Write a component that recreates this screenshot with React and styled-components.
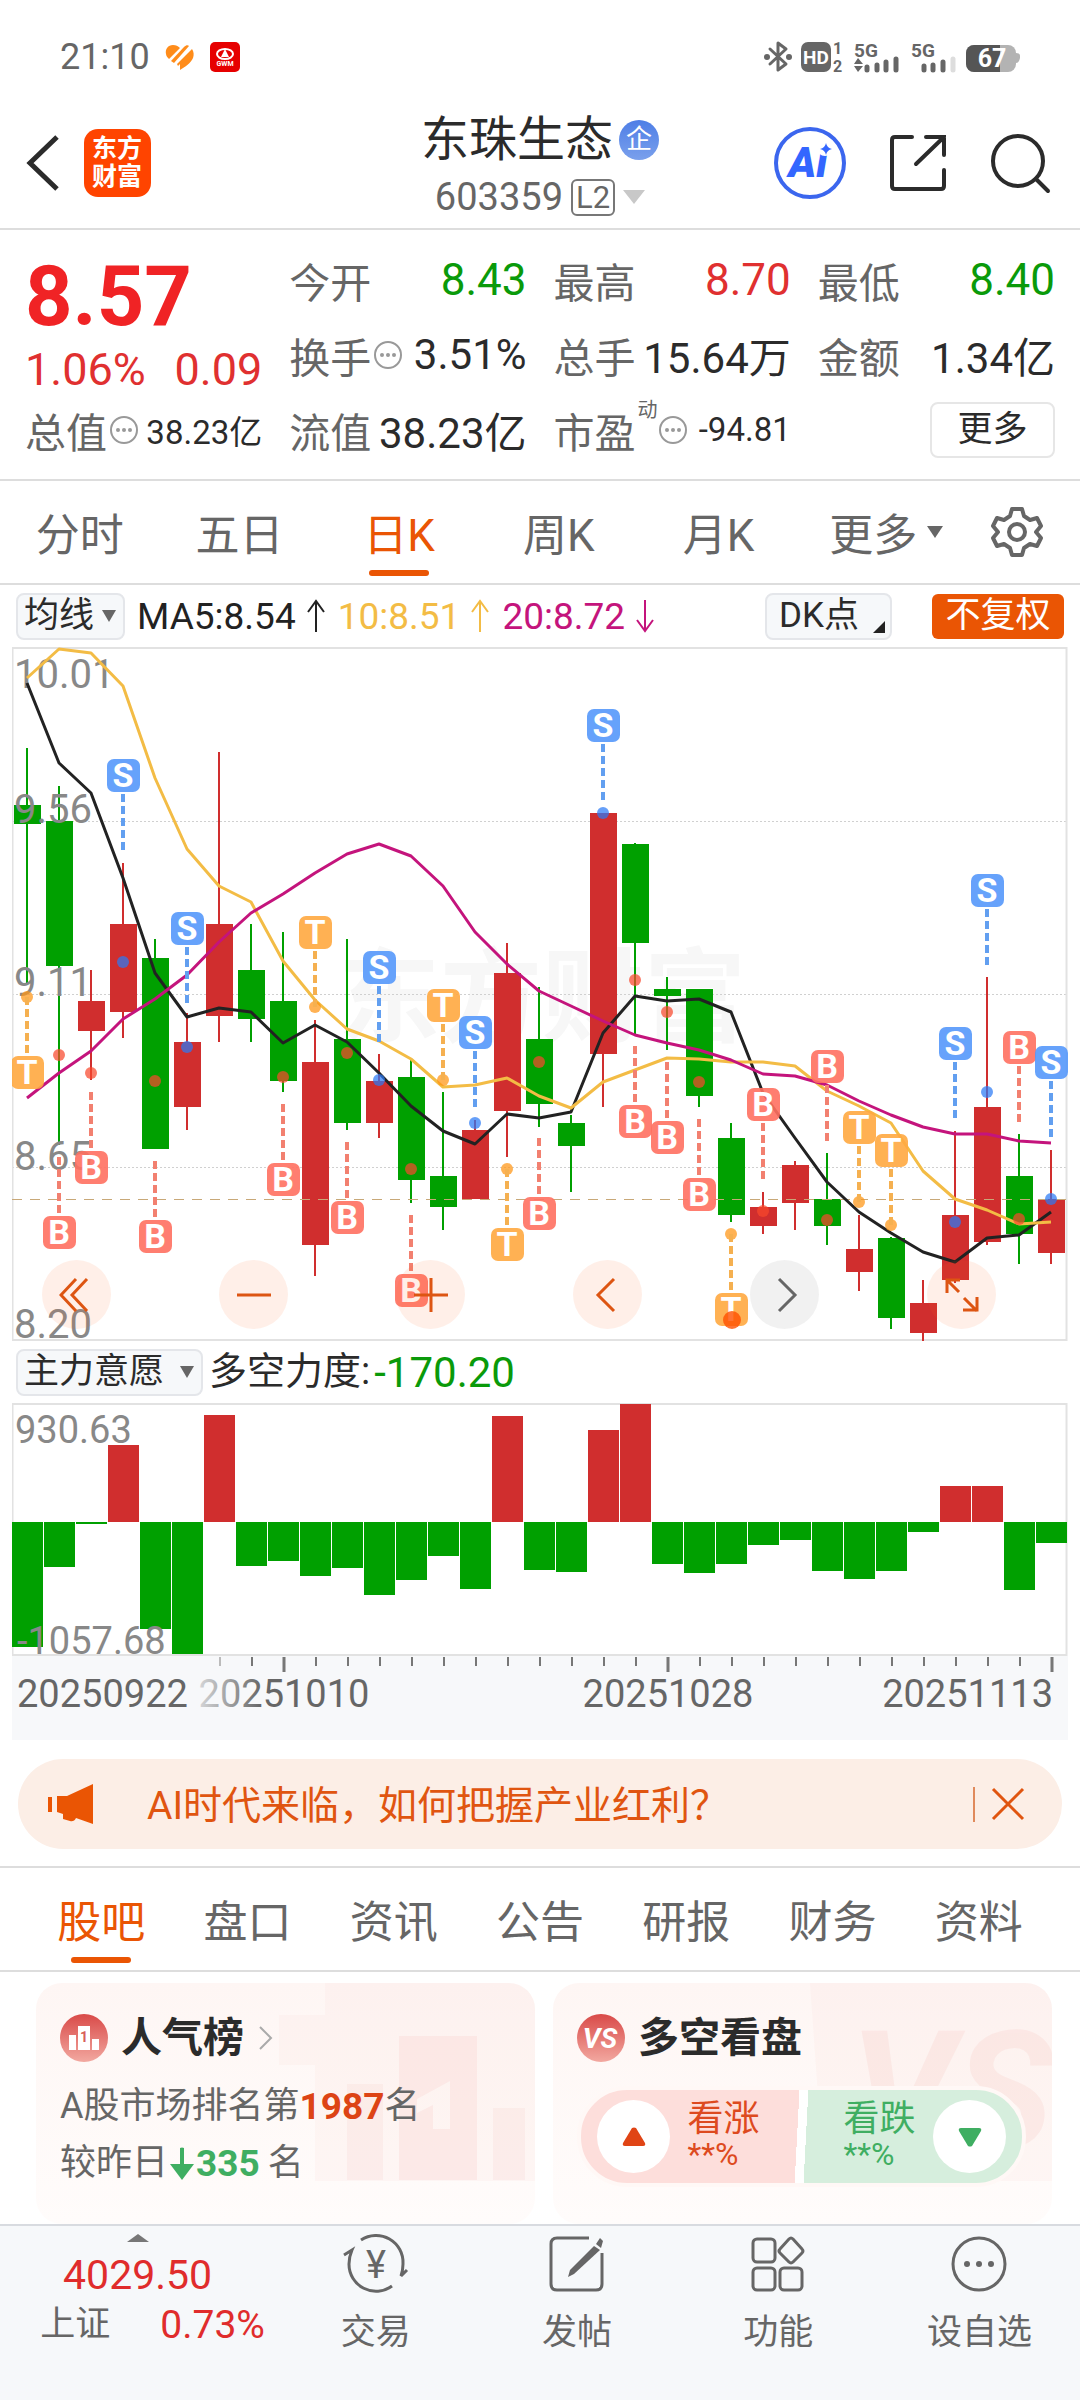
import styled, { createGlobalStyle, css } from "styled-components";

const GlobalStyle = createGlobalStyle`
  * {
    box-sizing: border-box;
  }
  body {
    margin: 0;
    background: #fff;
    color: #2b2b2b;
    font-family: Roboto, "Noto Sans CJK SC", sans-serif;
  }
  button {
    padding: 0;
    border: 0;
    background: none;
    color: inherit;
    font: inherit;
    cursor: pointer;
  }
  a {
    color: inherit;
    text-decoration: none;
  }
  svg {
    display: block;
    flex: none;
  }
`;

const UP = "#d02e2e";
const DOWN = "#00a000";
const ACCENT = "#ea5504";

const Page = styled.div`
  display: flex;
  flex-direction: column;
  min-height: 100vh;
`;

/* ---------- status bar ---------- */

const StatusBar = styled.div`
  display: flex;
  align-items: center;
  justify-content: space-between;
  height: 96px;
  padding: 18px 60px 0;
  color: #666;
`;
const StatusGroup = styled.div`
  display: flex;
  align-items: center;
  gap: ${(props) => props.$gap}px;
`;
const Clock = styled.span`
  font-size: 36px;
`;

function StatusIcons() {
  return (
    <svg width="256" height="52" viewBox="764 31 256 52" fill="#666">
      <path
        d="M770 49l16 15-8 6V43l8 6-16 15"
        fill="none"
        stroke="#666"
        strokeWidth="3"
        strokeLinejoin="round"
        strokeLinecap="round"
      />
      <circle cx="767" cy="57" r="3" />
      <circle cx="789" cy="57" r="3" />
      <rect x="801" y="42" width="30" height="30" rx="7" />
      <text x="816" y="64" fontSize="19" fontWeight="700" fill="#fff" textAnchor="middle">
        HD
      </text>
      <text x="833" y="54" fontSize="16" fontWeight="700">
        1
      </text>
      <text x="833" y="72" fontSize="16" fontWeight="700">
        2
      </text>
      <text x="854" y="57" fontSize="19" fontWeight="700">
        5G
      </text>
      <path d="M854 64l4-6 5 6zM854 66h9l-5 6z" />
      <path
        d="M867 67v3M877 65v5M886 62v8M896 59v11M924 66v4M933 65v5M943 62v8"
        stroke="#666"
        strokeWidth="5"
        strokeLinecap="round"
      />
      <path d="M953 59v11" stroke="#ddd" strokeWidth="5" strokeLinecap="round" />
      <text x="911" y="57" fontSize="19" fontWeight="700">
        5G
      </text>
      <rect x="966" y="45" width="50" height="27" rx="8" fill="#b3b3b3" />
      <path d="M1016 53q5 0 4 5t-4 5z" fill="#b3b3b3" />
      <path d="M974 45h26v27h-26a8 8 0 0 1-8-8v-11a8 8 0 0 1 8-8z" fill="#555" />
      <text x="992" y="67" fontSize="25" fontWeight="700" fill="#fff" textAnchor="middle">
        67
      </text>
    </svg>
  );
}

function HeartIcon() {
  return (
    <svg width="30" height="26" viewBox="0 0 30 26" fill="#ff8c1a">
      <path d="M8 1C3 1 0 5 1 10c0 2 2 4 3 5L15 4C13 2 11 1 8 1z" />
      <path d="M6 17L19 3c2-2 4-2 5-1L9 19z" />
      <path d="M12 20L27 5c2 3 2 6 1 9-2 5-8 9-13 12v-6l-2 2z" />
    </svg>
  );
}

function CarAppIcon() {
  return (
    <svg width="30" height="30" viewBox="0 0 30 30">
      <rect width="30" height="30" rx="5" fill="#e60000" />
      <ellipse cx="15" cy="12" rx="8" ry="5" fill="none" stroke="#fff" strokeWidth="2" />
      <path d="M15 7l4 8h-8z" fill="#fff" />
      <text x="15" y="24" fontSize="7" fontWeight="700" fill="#fff" textAnchor="middle">
        GWM
      </text>
    </svg>
  );
}

/* ---------- header ---------- */

const Header = styled.header`
  display: grid;
  grid-template-columns: 1fr auto 1fr;
  align-items: center;
  height: 134px;
  padding: 2px 28px 0 24px;
  border-bottom: 2px solid #ddd;
`;
const HeaderSide = styled.div`
  display: flex;
  align-items: center;
  justify-content: ${(props) => (props.$end ? "flex-end" : "flex-start")};
  gap: ${(props) => (props.$end ? 42 : 24)}px;
`;
const AppLogo = styled.span`
  width: 67px;
  height: 68px;
  padding: 6px 8px;
  border-radius: 14px;
  background: #ff4400;
  color: #fff;
  font-family: "Liberation Serif", "Noto Sans CJK SC", serif;
  font-size: 25px;
  font-weight: 700;
  line-height: 28px;
`;
const TitleBlock = styled.div`
  display: flex;
  flex-direction: column;
  align-items: center;
  padding: 4px 0 0 4px;
`;
const StockName = styled.h1`
  display: flex;
  align-items: center;
  gap: 6px;
  margin: 0;
  font-size: 48px;
  font-weight: 400;
  line-height: 64px;
`;
const EntBadge = styled.span`
  width: 40px;
  height: 40px;
  border-radius: 50%;
  background: linear-gradient(#4e7ee6, #7aa0ec);
  color: #fff;
  font-size: 26px;
  line-height: 38px;
  text-align: center;
`;
const StockCode = styled.div`
  display: flex;
  align-items: center;
  gap: 8px;
  color: #666;
  font-size: 38px;
  line-height: 50px;
`;
const Level = styled.span`
  height: 37px;
  padding: 0 3px;
  border: 2px solid #777;
  border-radius: 6px;
  font-size: 31px;
  line-height: 34px;
`;
const Caret = styled.span`
  border: ${(props) => props.$size || 8}px solid transparent;
  border-top: ${(props) => props.$drop || 12}px solid ${(props) => props.$color || "#666"};
  border-bottom: 0;
`;

/* ---------- quote ---------- */

const Quote = styled.section`
  display: grid;
  grid-template-columns: repeat(4, 1fr);
  grid-template-rows: repeat(3, 75px);
  column-gap: 27px;
  padding: 12px 25px;
  border-bottom: 2px solid #ddd;
`;
const PriceBlock = styled.div`
  grid-row: 1 / span 2;
  display: flex;
  flex-direction: column;
  color: #e03030;
`;
const Price = styled.strong`
  padding-top: 6px;
  color: #f02325;
  font-size: 83px;
  line-height: 98px;
`;
const Change = styled.div`
  display: flex;
  justify-content: space-between;
  font-size: 45px;
  line-height: 48px;
`;
const Stat = styled.div`
  display: flex;
  align-items: center;
  min-width: 0;
  white-space: nowrap;
`;
const StatLabel = styled.span`
  margin-right: 2px;
  color: #666;
  font-size: 41px;
`;
const StatSup = styled.sup`
  align-self: flex-start;
  color: #666;
  font-size: 20px;
  line-height: 36px;
`;
const StatValue = styled.span`
  margin-left: auto;
  font-size: ${(props) => (props.$small ? 33 : props.$color ? 44 : 42)}px;
  color: ${(props) => props.$color || "#2b2b2b"};
`;
const MoreButton = styled.button`
  align-self: center;
  justify-self: end;
  width: 125px;
  height: 56px;
  border: 2px solid #e6e6e6;
  border-radius: 8px;
  font-size: 35px;
  line-height: 48px;
`;

function DotsIcon() {
  return (
    <svg width="30" height="30" viewBox="0 0 30 30">
      <circle cx="15" cy="15" r="13" fill="none" stroke="#999" strokeWidth="2" />
      <circle cx="9" cy="15" r="2" fill="#999" />
      <circle cx="15" cy="15" r="2" fill="#999" />
      <circle cx="21" cy="15" r="2" fill="#999" />
    </svg>
  );
}

const stats = [
  { label: "今开", value: "8.43", color: "#0a9a0a" },
  { label: "最高", value: "8.70", color: "#e03030" },
  { label: "最低", value: "8.40", color: "#0a9a0a" },
  { label: "换手", value: "3.51%", info: true },
  { label: "总手", value: "15.64万" },
  { label: "金额", value: "1.34亿" },
  { label: "总值", value: "38.23亿", info: true, small: true },
  { label: "流值", value: "38.23亿" },
  { label: "市盈", value: "-94.81", sup: "动", info: true, small: true },
];

/* ---------- tabs ---------- */

const Tabs = styled.nav`
  display: flex;
  align-items: stretch;
  height: 104px;
  border-bottom: 2px solid #ddd;
  ${(props) =>
    props.$inset &&
    css`
      padding: 0 28px;
      border-top: 2px solid #ddd;
      height: 106px;
    `}
`;
const Tab = styled.button`
  position: relative;
  flex: ${(props) => (props.$menu ? 1.1 : 1)} 1 0;
  display: flex;
  align-items: center;
  justify-content: center;
  gap: 10px;
  font-size: 44px;
  color: ${(props) => (props.$active ? ACCENT : "#666")};
  ${(props) =>
    props.$active &&
    css`
      &::after {
        content: "";
        position: absolute;
        left: 50%;
        bottom: 7px;
        width: 60px;
        height: 6px;
        margin-left: -30px;
        border-radius: 3px;
        background: ${ACCENT};
      }
    `}
`;
const GearButton = styled.button`
  display: flex;
  align-items: center;
  justify-content: center;
  width: 106px;
  padding-right: 20px;
`;

/* ---------- indicator rows ---------- */

const IndicatorRow = styled.div`
  display: flex;
  align-items: center;
  height: 62px;
  padding: 0 16px;
  font-size: 37px;
  white-space: nowrap;
`;
const Chip = styled.button`
  position: relative;
  display: flex;
  align-items: center;
  gap: ${(props) => props.$gap || 8}px;
  height: 47px;
  padding: 0 7px 0 6px;
  border: 2px solid #e4e6ea;
  border-radius: 8px;
  background: #f6f8fa;
  font-size: 35px;
  line-height: 40px;
  ${(props) =>
    props.$corner &&
    css`
      width: 127px;
      margin-left: auto;
      padding-left: 12px;
      &::after {
        content: "";
        position: absolute;
        right: 5px;
        bottom: 5px;
        border-left: 12px solid transparent;
        border-bottom: 12px solid #222;
      }
    `}
`;
const AdjustButton = styled.button`
  width: 132px;
  height: 45px;
  margin-left: 40px;
  border-radius: 6px;
  background: ${ACCENT};
  color: #fff;
  font-size: 35px;
  line-height: 44px;
`;
const MaValue = styled.span`
  display: flex;
  align-items: center;
  gap: 10px;
  margin-left: 12px;
  color: ${(props) => props.$color};
`;
const ForceLabel = styled.span`
  margin-left: 6px;
  font-size: 38px;
  line-height: 52px;
  padding-bottom: 2px;
`;
const ForceValue = styled.span`
  margin-left: 4px;
  color: #0a9a0a;
  font-size: 42px;
`;

function TrendArrow({ down }) {
  return (
    <svg width="20" height="36" viewBox="0 0 20 36" fill="none" stroke="currentColor" strokeWidth="2">
      <path d={down ? "M10 2v31M2 22l8 11 8-11" : "M10 34V3M2 14l8-11 8 11"} />
    </svg>
  );
}

/* ---------- charts ---------- */

// [direction, high, body top, body bottom, low] on the vertical scale of the chart
const candles = [
  [0, 748, 805, 824, 985],
  [0, 786, 821, 966, 1145],
  [1, 970, 1001, 1031, 1080],
  [1, 863, 924, 1012, 1038],
  [0, 939, 958, 1149, 1149],
  [1, 1013, 1042, 1107, 1130],
  [1, 752, 924, 1016, 1042],
  [0, 924, 970, 1019, 1042],
  [0, 932, 1001, 1081, 1092],
  [1, 1020, 1062, 1245, 1276],
  [0, 939, 1039, 1123, 1130],
  [1, 1054, 1081, 1123, 1138],
  [0, 1059, 1077, 1180, 1203],
  [0, 1092, 1176, 1207, 1230],
  [1, 1120, 1130, 1199, 1199],
  [1, 943, 973, 1111, 1157],
  [0, 987, 1039, 1104, 1127],
  [0, 1115, 1123, 1146, 1192],
  [1, 813, 813, 1054, 1107],
  [0, 843, 844, 943, 1035],
  [0, 977, 989, 996, 1050],
  [0, 989, 989, 1096, 1107],
  [0, 1123, 1138, 1215, 1222],
  [1, 1192, 1207, 1226, 1234],
  [1, 1161, 1165, 1203, 1230],
  [0, 1153, 1199, 1226, 1245],
  [1, 1215, 1249, 1272, 1291],
  [0, 1237, 1238, 1318, 1329],
  [1, 1280, 1303, 1333, 1341],
  [1, 1131, 1215, 1280, 1283],
  [1, 977, 1107, 1242, 1245],
  [0, 1134, 1176, 1234, 1264],
  [1, 1150, 1199, 1253, 1264],
];

const ma5 = [
  683, 763, 793, 878, 973, 1017, 1008, 1012, 1043, 1025, 1042, 1073, 1106, 1131,
  1144, 1114, 1118, 1112, 1033, 996, 1001, 999, 1012, 1093, 1138, 1182, 1212,
  1233, 1252, 1262, 1238, 1235, 1212,
];
const ma10 = [
  678, 649, 653, 686, 778, 849, 886, 902, 961, 1000, 1029, 1041, 1059, 1087,
  1085, 1078, 1096, 1108, 1082, 1070, 1058, 1059, 1062, 1062, 1066, 1091, 1106,
  1123, 1171, 1199, 1210, 1224, 1222,
];
const ma20 = [
  1098, 1073, 1051, 1019, 999, 975, 942, 913, 894, 873, 854, 844, 856, 886, 932,
  964, 991, 1006, 1021, 1035, 1043, 1050, 1060, 1074, 1076, 1085, 1101, 1115,
  1127, 1134, 1134, 1141, 1143,
];

// [candle index, letter, badge centre, dot centre]
const signals = [
  [0, "T", 1072, 997],
  [1, "B", 1232, 1055],
  [2, "B", 1167, 1073],
  [3, "S", 775, 962],
  [4, "B", 1236, 1081],
  [5, "S", 928, 1047],
  [8, "B", 1179, 1077],
  [9, "T", 932, 1007],
  [10, "B", 1217, 1053],
  [11, "S", 967, 1080],
  [12, "B", 1290, 1169],
  [13, "T", 1005, 1080],
  [14, "S", 1032, 1123],
  [15, "T", 1244, 1169],
  [16, "B", 1213, 1062],
  [18, "S", 725, 813],
  [19, "B", 1121, 980],
  [20, "B", 1137, 1012],
  [21, "B", 1194, 1082],
  [22, "T", 1309, 1234],
  [23, "B", 1104, 1211],
  [25, "B", 1066, 1220],
  [26, "T", 1127, 1202],
  [27, "T", 1150, 1225],
  [29, "S", 1043, 1222],
  [30, "S", 890, 1092],
  [31, "B", 1047, 1219],
  [32, "S", 1062, 1199],
];

const signalColors = {
  S: { badge: "#5598fb", line: "#629ff0", dot: "#2b7af5" },
  B: { badge: "#ff7060", line: "#f28070", dot: "#f8482c" },
  T: { badge: "#ffa840", line: "#f5b050", dot: "#ff9412" },
};

const priceLabels = [
  ["10.01", 688],
  ["9.56", 823],
  ["9.11", 996],
  ["8.65", 1170],
  ["8.20", 1338],
];

const xAt = (i) => 27 + 32 * i;
const toPoints = (values) => values.map((y, i) => `${xAt(i)},${y}`).join(" ");

const ChartFrame = styled.div`
  position: relative;
  margin: 0 12px;
`;
const ChartSvg = styled.svg`
  width: 100%;
  height: auto;
`;
const ChartControls = styled.div`
  position: absolute;
  left: 30px;
  right: 72px;
  bottom: 12px;
  display: flex;
  justify-content: space-between;
`;
const RoundButton = styled.button`
  display: flex;
  align-items: center;
  justify-content: center;
  width: 69px;
  height: 69px;
  border-radius: 50%;
  background: ${(props) => (props.$muted ? "rgba(102, 102, 102, 0.09)" : "rgba(255, 100, 30, 0.1)")};
  color: ${(props) => (props.$muted ? "#666" : "#dd5512")};
`;

function Signal({ index, letter, badge, dot }) {
  const x = xAt(index);
  const dir = dot > badge ? 1 : -1;
  const color = signalColors[letter];
  return (
    <g>
      <circle cx={x} cy={dot} r="6" fill={color.dot} opacity="0.72" />
      <path
        d={`M${x} ${badge + 19 * dir}v${56 * dir}`}
        stroke={color.line}
        strokeWidth="4"
        strokeDasharray="8 4"
      />
      <rect x={x - 16} y={badge - 16} width="33" height="33" rx="7" fill={color.badge} opacity="0.9" />
      <text x={x} y={badge + 12} fontSize="34" fontWeight="700" fill="#fff" textAnchor="middle">
        {letter}
      </text>
    </g>
  );
}

function CandleChart() {
  return (
    <ChartSvg viewBox="12 647 1056 694" role="img" aria-label="日K">
      <text x="338" y="1034" fontSize="102" fontWeight="700" fill="#f7f7f7">
        东方财富
      </text>
      <g stroke="#d0d0d0" strokeDasharray="2 2">
        <path d="M12 821.5h1055M12 994.5h1055M12 1167.5h1055" />
      </g>
      <rect x="12.5" y="648" width="1054" height="692" fill="none" stroke="#e2e2e2" strokeWidth="2" />
      {candles.map(([up, high, top, bottom, low], i) => (
        <g key={i} fill={up ? UP : DOWN}>
          <rect x={xAt(i) - 1} y={high} width="2" height={low - high} />
          <rect x={xAt(i) - 13} y={top} width="27" height={bottom - top} />
        </g>
      ))}
      <path d="M12 1199.5h1055" stroke="#c8a878" strokeWidth="1" strokeDasharray="10 8" />
      {priceLabels.map(([label, y]) => (
        <text key={label} x="14" y={y} fontSize="40" fill="#888">
          {label}
        </text>
      ))}
      <g fill="none" strokeWidth="3" strokeLinejoin="round">
        <polyline points={toPoints(ma5)} stroke="#222" />
        <polyline points={toPoints(ma10)} stroke="#f3bc45" />
        <polyline points={toPoints(ma20)} stroke="#c4147c" />
      </g>
      {signals.map(([index, letter, badge, dot]) => (
        <Signal key={index} index={index} letter={letter} badge={badge} dot={dot} />
      ))}
      <circle cx="732" cy="1320" r="9" fill="#ff5000" opacity="0.8" />
    </ChartSvg>
  );
}

// bar heights around the zero line, positive is up
const forces = [
  -125, -45, -2, 77, -107, -132, 107, -44, -39, -54, -46, -73, -58, -34, -67,
  106, -48, -50, 92, 118, -42, -51, -42, -23, -18, -49, -57, -49, -10, 36, 36,
  -68, -21,
];

function ForceChart() {
  return (
    <ChartSvg viewBox="12 1403 1056 337" role="img" aria-label="多空力度">
      <defs>
        <linearGradient id="fade" gradientUnits="userSpaceOnUse" x1="200" x2="262" y1="0" y2="0">
          <stop offset="0" stopColor="#666" stopOpacity="0.25" />
          <stop offset="1" stopColor="#666" />
        </linearGradient>
      </defs>
      <rect x="12" y="1656" width="1056" height="84" fill="#f7f8fa" />
      <rect x="12.5" y="1404" width="1054" height="251" fill="none" stroke="#e2e2e2" strokeWidth="2" />
      {forces.map((value, i) => (
        <rect
          key={i}
          x={xAt(i) - 15}
          y={value > 0 ? 1522 - value : 1522}
          width="31"
          height={Math.abs(value)}
          fill={value > 0 ? UP : DOWN}
        />
      ))}
      <g fontSize="38" fill="#888">
        <text x="15" y="1443">
          930.63
        </text>
        <text x="17" y="1654">
          -1057.68
        </text>
      </g>
      {forces.map((_, i) =>
        i < 6 ? null : (
          <path
            key={i}
            d={`M${xAt(i) + 1} 1657v${i % 12 === 8 ? 15 : 9}`}
            stroke={i === 6 ? "#bbb" : "#777"}
            strokeWidth={i % 12 === 8 ? 3 : 2}
          />
        )
      )}
      <g fontSize="38" fill="#666">
        <text x="17" y="1707">
          20250922
        </text>
        <text x="284" y="1707" textAnchor="middle" fill="url(#fade)">
          20251010
        </text>
        <text x="668" y="1707" textAnchor="middle">
          20251028
        </text>
        <text x="1053" y="1707" textAnchor="end">
          20251113
        </text>
      </g>
    </ChartSvg>
  );
}

const controls = [
  { name: "快退", path: "M17 2L2 18l15 16M28 2L13 18l15 16" },
  { name: "缩小", path: "M1 18h34" },
  { name: "放大", path: "M1 18h34M18 1v34" },
  { name: "向左", path: "M24 2L8 18l16 16" },
  { name: "向右", path: "M12 2l16 16-16 16", muted: true },
  { name: "全屏", path: "M16 3H3v13M3 3l12 12M20 21l13 13M33 20v13H19" },
];

/* ---------- notice ---------- */

const Notice = styled.div`
  display: flex;
  align-items: center;
  height: 90px;
  margin: 19px 18px 17px;
  padding: 0 37px 0 30px;
  border-radius: 45px;
  background: #fceee6;
  color: #e05510;
  font-size: 39px;
`;
const NoticeLink = styled.a`
  flex: 1;
  margin-left: 53px;
  padding-bottom: 4px;
`;
const CloseButton = styled.button`
  height: 35px;
  padding-left: 16px;
  border-left: 2px solid #e08a5c;
`;

/* ---------- cards ---------- */

const Cards = styled.section`
  display: grid;
  grid-template-columns: 1fr 1fr;
  gap: 18px;
  padding: 11px 28px 0 36px;
`;
const Card = styled.article`
  position: relative;
  min-height: 241px;
  padding: 31px 26px 15px 24px;
  border-radius: 26px;
  background: linear-gradient(#fef6f4, #fffcfb);
  overflow: hidden;
`;
const CardArt = styled.svg`
  position: absolute;
  top: 0;
  right: 0;
`;
const CardTitle = styled.h2`
  position: relative;
  display: flex;
  align-items: center;
  gap: 13px;
  margin: 0 0 16px;
  font-size: 41px;
  font-weight: 700;
  line-height: 48px;
`;
const CardLine = styled.p`
  position: relative;
  display: flex;
  align-items: center;
  margin: 0;
  color: #666;
  font-size: 36px;
  line-height: 57px;
`;
const Figure = styled.b`
  margin-right: ${(props) => props.$gap || 0}px;
  color: ${(props) => props.$color};
  font-size: 37px;
`;
const VotePill = styled.div`
  position: relative;
  display: flex;
  height: 101px;
  margin-top: 24px;
  border: 4px solid #fff8f6;
  border-radius: 50px;
  background: linear-gradient(93deg, #fddedb 49%, #fff 49%, #fff 51%, #d6eedd 51%);
`;
const VoteButton = styled.button`
  flex: 1;
  display: flex;
  align-items: center;
  justify-content: space-between;
  flex-direction: ${(props) => (props.$down ? "row-reverse" : "row")};
  padding: ${(props) => (props.$down ? "0 16px 0 50px" : "0 34px 0 16px")};
  color: ${(props) => (props.$down ? "#3fae62" : "#dd4a20")};
  text-align: left;
`;
const VoteDisc = styled.span`
  display: flex;
  align-items: center;
  justify-content: center;
  width: 73px;
  height: 73px;
  border-radius: 50%;
  background: #fff;
`;
const VoteText = styled.span`
  display: flex;
  flex-direction: column;
  font-size: 36px;
  line-height: 38px;
  padding-bottom: 4px;
`;
const VoteShare = styled.span`
  font-size: 32px;
  line-height: 32px;
`;

function RankIcon() {
  return (
    <svg width="48" height="48" viewBox="0 0 48 48">
      <defs>
        <linearGradient id="coral" x2="0" y2="1">
          <stop offset="0" stopColor="#d94a48" />
          <stop offset="1" stopColor="#f2a8a0" />
        </linearGradient>
      </defs>
      <circle cx="24" cy="24" r="24" fill="url(#coral)" />
      <path d="M9 21h7v15H9zM18 12h12v24H18zM32 25h7v11h-7z" fill="#fff" />
      <text x="24" y="28" fontSize="14" fontWeight="700" fill="#d86058" textAnchor="middle">
        1
      </text>
    </svg>
  );
}

function VsIcon() {
  return (
    <svg width="48" height="48" viewBox="0 0 48 48">
      <circle cx="24" cy="24" r="24" fill="url(#coral)" />
      <text
        x="23"
        y="34"
        fontSize="28"
        fontWeight="700"
        fontStyle="italic"
        fill="#fff"
        textAnchor="middle"
      >
        VS
      </text>
    </svg>
  );
}

/* ---------- bottom bar ---------- */

const BottomBar = styled.nav`
  flex: 1;
  display: grid;
  grid-template-columns: minmax(0, 275fr) repeat(4, minmax(0, 201fr));
  min-height: 176px;
  border-top: 2px solid #d8dbe0;
  background: #f6f8fa;
`;
const BottomItem = styled.a`
  display: flex;
  flex-direction: column;
  align-items: center;
  gap: 15px;
  padding-top: 7px;
  color: #666;
  font-size: 35px;
  line-height: 50px;
`;
const IndexItem = styled.a`
  display: flex;
  flex-direction: column;
  align-items: center;
  padding-top: 8px;
  color: #e02c2c;
  font-size: 41px;
  line-height: 50px;
`;
const IndexCaret = styled.span`
  margin-bottom: 8px;
  border: 11px solid transparent;
  border-top: 0;
  border-bottom: 8px solid #777;
`;
const IndexRow = styled.span`
  display: flex;
  align-items: center;
  gap: 50px;
  padding-left: 30px;
  font-size: 39px;
`;
const IndexName = styled.span`
  color: #666;
  font-size: 35px;
`;

const iconProps = {
  width: 66,
  height: 60,
  viewBox: "0 0 66 60",
  fill: "none",
  stroke: "#666",
  strokeWidth: 3,
};

function TradeIcon() {
  return (
    <svg {...iconProps}>
      <path d="M18 7a27 27 0 0 1 42 24q0 6-2 12l6-6" />
      <path d="M49 53A27 27 0 0 1 6 31q0-7 3-14l-8 5" />
      <text x="33" y="45" fontSize="38" fill="#666" stroke="none" textAnchor="middle">
        ¥
      </text>
    </svg>
  );
}

function PostIcon() {
  return (
    <svg {...iconProps}>
      <path d="M45 5H13q-6 0-6 6v40q0 6 6 6h39q6 0 6-6V20" />
      <path d="M50 13l6 4-26 24-6 3 2-7z" fill="#666" stroke="none" />
      <path d="M52 11l4-6 3 3-2 7z" fill="#666" stroke="none" />
    </svg>
  );
}

function FeaturesIcon() {
  return (
    <svg {...iconProps}>
      <rect x="8" y="6" width="22" height="23" rx="4" />
      <rect x="8" y="35" width="22" height="22" rx="4" />
      <rect x="35" y="35" width="22" height="22" rx="4" />
      <path d="M44 6q2-2 4 0l9 10q2 2 0 4l-9 9q-2 2-4 0l-9-9q-2-2 0-4z" />
    </svg>
  );
}

function WatchIcon() {
  return (
    <svg {...iconProps}>
      <circle cx="33" cy="31" r="26" />
      <g fill="#666" stroke="none">
        <circle cx="21" cy="31" r="3" />
        <circle cx="33" cy="31" r="3" />
        <circle cx="45" cy="31" r="3" />
      </g>
    </svg>
  );
}

const bottomItems = [
  { label: "交易", Icon: TradeIcon },
  { label: "发帖", Icon: PostIcon },
  { label: "功能", Icon: FeaturesIcon },
  { label: "设自选", Icon: WatchIcon },
];

function App() {
  return (
    <Page>
      <GlobalStyle />

      <StatusBar>
        <StatusGroup $gap={15}>
          <Clock>21:10</Clock>
          <HeartIcon />
          <CarAppIcon />
        </StatusGroup>
        <StatusIcons />
      </StatusBar>

      <Header>
        <HeaderSide>
          <button aria-label="返回">
            <svg width="36" height="58" viewBox="0 0 36 58" fill="none" stroke="#2b2b2b" strokeWidth="5">
              <path d="M33 3L6 29l27 26" />
            </svg>
          </button>
          <AppLogo>东方财富</AppLogo>
        </HeaderSide>
        <TitleBlock>
          <StockName>
            东珠生态 <EntBadge>企</EntBadge>
          </StockName>
          <StockCode>
            603359 <Level>L2</Level>
            <Caret $size={11} $drop={14} $color="#c8c8c8" />
          </StockCode>
        </TitleBlock>
        <HeaderSide $end>
          <button aria-label="AI">
            <svg width="72" height="72" viewBox="0 0 72 72">
              <circle cx="36" cy="36" r="34" fill="none" stroke="#3b66ee" strokeWidth="4" />
              <text
                x="34"
                y="50"
                fontSize="42"
                fontWeight="900"
                fontStyle="italic"
                fill="#3366ff"
                textAnchor="middle"
              >
                Ai
              </text>
              <circle cx="51" cy="21" r="8" fill="#fff" />
              <path d="M52 16q1 5 6 6-5 1-6 6-1-5-6-6 5-1 6-6z" fill="#3366ff" />
            </svg>
          </button>
          <button aria-label="分享">
            <svg
              width="60"
              height="60"
              viewBox="0 0 60 60"
              fill="none"
              stroke="#2b2b2b"
              strokeWidth="4"
              strokeLinecap="round"
            >
              <path d="M24 4H7q-3 0-3 3v46q0 3 3 3h46q3 0 3-3V37" />
              <path d="M38 4h18v18M56 4L28 31" />
            </svg>
          </button>
          <button aria-label="搜索">
            <svg
              width="62"
              height="62"
              viewBox="0 0 62 62"
              fill="none"
              stroke="#2b2b2b"
              strokeWidth="4"
              strokeLinecap="round"
            >
              <circle cx="28" cy="29" r="25" />
              <path d="M46 47l12 12" />
            </svg>
          </button>
        </HeaderSide>
      </Header>

      <Quote>
        <PriceBlock>
          <Price>8.57</Price>
          <Change>
            <span>1.06%</span>
            <span>0.09</span>
          </Change>
        </PriceBlock>
        {stats.map((stat) => (
          <Stat key={stat.label}>
            <StatLabel>{stat.label}</StatLabel>
            {stat.sup && <StatSup>{stat.sup}</StatSup>}
            {stat.info && <DotsIcon />}
            <StatValue $small={stat.small} $color={stat.color}>
              {stat.value}
            </StatValue>
          </Stat>
        ))}
        <MoreButton>更多</MoreButton>
      </Quote>

      <Tabs>
        {["分时", "五日", "日K", "周K", "月K"].map((name) => (
          <Tab key={name} $active={name === "日K"}>
            {name}
          </Tab>
        ))}
        <Tab $menu>
          更多 <Caret />
        </Tab>
        <GearButton aria-label="设置">
          <svg width="52" height="52" viewBox="0 0 52 52" fill="none" stroke="#666" strokeWidth="4">
            <path
              d="M21 3h10l2 7 6 4 7-2 4 8-5 6 5 6-4 8-7-2-6 4-2 7H21l-2-7-6-4-7 2-4-8 5-6-5-6 4-8 7 2 6-4z"
              strokeLinejoin="round"
            />
            <circle cx="26" cy="26" r="8" />
          </svg>
        </GearButton>
      </Tabs>

      <IndicatorRow>
        <Chip>
          均线 <Caret $size={7} />
        </Chip>
        <MaValue $color="#222">
          MA5:8.54 <TrendArrow />
        </MaValue>
        <MaValue $color="#f3bc45">
          10:8.51 <TrendArrow />
        </MaValue>
        <MaValue $color="#c4147c">
          20:8.72 <TrendArrow down />
        </MaValue>
        <Chip $corner>DK点</Chip>
        <AdjustButton>不复权</AdjustButton>
      </IndicatorRow>

      <ChartFrame>
        <CandleChart />
        <ChartControls>
          {controls.map(({ name, path, muted }) => (
            <RoundButton key={name} aria-label={name} $muted={muted}>
              <svg width="36" height="36" viewBox="0 0 36 36" fill="none" stroke="currentColor" strokeWidth="3">
                <path d={path} />
              </svg>
            </RoundButton>
          ))}
        </ChartControls>
      </ChartFrame>

      <IndicatorRow>
        <Chip $gap={16}>
          主力意愿 <Caret $size={7} />
        </Chip>
        <ForceLabel>多空力度:</ForceLabel>
        <ForceValue>-170.20</ForceValue>
      </IndicatorRow>

      <ChartFrame>
        <ForceChart />
      </ChartFrame>

      <Notice>
        <svg width="46" height="40" viewBox="0 0 46 40" fill={ACCENT}>
          <path d="M0 13h4v15H0zM9 12h10L45 0v40l-17-6q-2 4-6 3l-7-2v-5l-6-2z" />
        </svg>
        <NoticeLink href="#notice">AI时代来临，如何把握产业红利？</NoticeLink>
        <CloseButton aria-label="关闭">
          <svg width="34" height="34" viewBox="0 0 34 34" stroke="#e05510" strokeWidth="3">
            <path d="M2 2l30 30M32 2L2 32" />
          </svg>
        </CloseButton>
      </Notice>

      <Tabs $inset>
        {["股吧", "盘口", "资讯", "公告", "研报", "财务", "资料"].map((name) => (
          <Tab key={name} $active={name === "股吧"}>
            {name}
          </Tab>
        ))}
      </Tabs>

      <Cards>
        <Card>
          <CardArt width="256" height="200" viewBox="0 0 256 200">
            <path d="M0 32h46V0h210v198H36V82H0z" fill="#fbe0dc" opacity="0.2" />
            <path d="M68 101h36v96H68z" fill="#f9d5d0" opacity="0.25" />
            <path
              d="M120 53h78v144h-78zM138 116v14l16-8v24h17V98z"
              fill="#f9d5d0"
              fillRule="evenodd"
              opacity="0.35"
            />
            <path d="M214 125h32v72h-32z" fill="#f9d5d0" opacity="0.25" />
          </CardArt>
          <CardTitle>
            <RankIcon />
            人气榜
            <svg width="18" height="26" viewBox="0 0 18 26" fill="none" stroke="#aaa" strokeWidth="2">
              <path d="M3 2l11 11L3 24" />
            </svg>
          </CardTitle>
          <CardLine>
            A股市场排名第<Figure $color="#dd4415">1987</Figure>名
          </CardLine>
          <CardLine>
            较昨日
            <svg width="28" height="34" viewBox="0 0 28 34" fill="#3fae62">
              <path d="M12 1q2-1 4 0v16h10L14 33 2 17h10z" />
            </svg>
            <Figure $color="#3fae62" $gap={8}>
              335
            </Figure>
            名
          </CardLine>
        </Card>
        <Card>
          <CardArt width="242" height="200" viewBox="0 0 242 200">
            <path d="M0 0h242v198H14z" fill="#fbe0dc" opacity="0.2" />
            <text
              x="40"
              y="165"
              fontSize="165"
              fontWeight="700"
              fontStyle="italic"
              fill="#f9d5d0"
              opacity="0.35"
            >
              VS
            </text>
          </CardArt>
          <CardTitle>
            <VsIcon />
            多空看盘
          </CardTitle>
          <VotePill>
            <VoteButton>
              <VoteDisc>
                <svg width="24" height="20" viewBox="0 0 24 20" fill="#e04415">
                  <path d="M10 1q2-1 4 0l9 15q1 3-2 3H3q-3 0-2-3z" />
                </svg>
              </VoteDisc>
              <VoteText>
                看涨
                <VoteShare>**%</VoteShare>
              </VoteText>
            </VoteButton>
            <VoteButton $down>
              <VoteDisc>
                <svg width="24" height="20" viewBox="0 0 24 20" fill="#3fae62">
                  <path d="M10 19q2 1 4 0l9-15q1-3-2-3H3Q0 1 1 4z" />
                </svg>
              </VoteDisc>
              <VoteText>
                看跌
                <VoteShare>**%</VoteShare>
              </VoteText>
            </VoteButton>
          </VotePill>
        </Card>
      </Cards>

      <BottomBar>
        <IndexItem href="#index">
          <IndexCaret />
          <span>4029.50</span>
          <IndexRow>
            <IndexName>上证</IndexName>
            0.73%
          </IndexRow>
        </IndexItem>
        {bottomItems.map(({ label, Icon }) => (
          <BottomItem key={label} href={`#${label}`}>
            <Icon />
            {label}
          </BottomItem>
        ))}
      </BottomBar>
    </Page>
  );
}

export default App;
